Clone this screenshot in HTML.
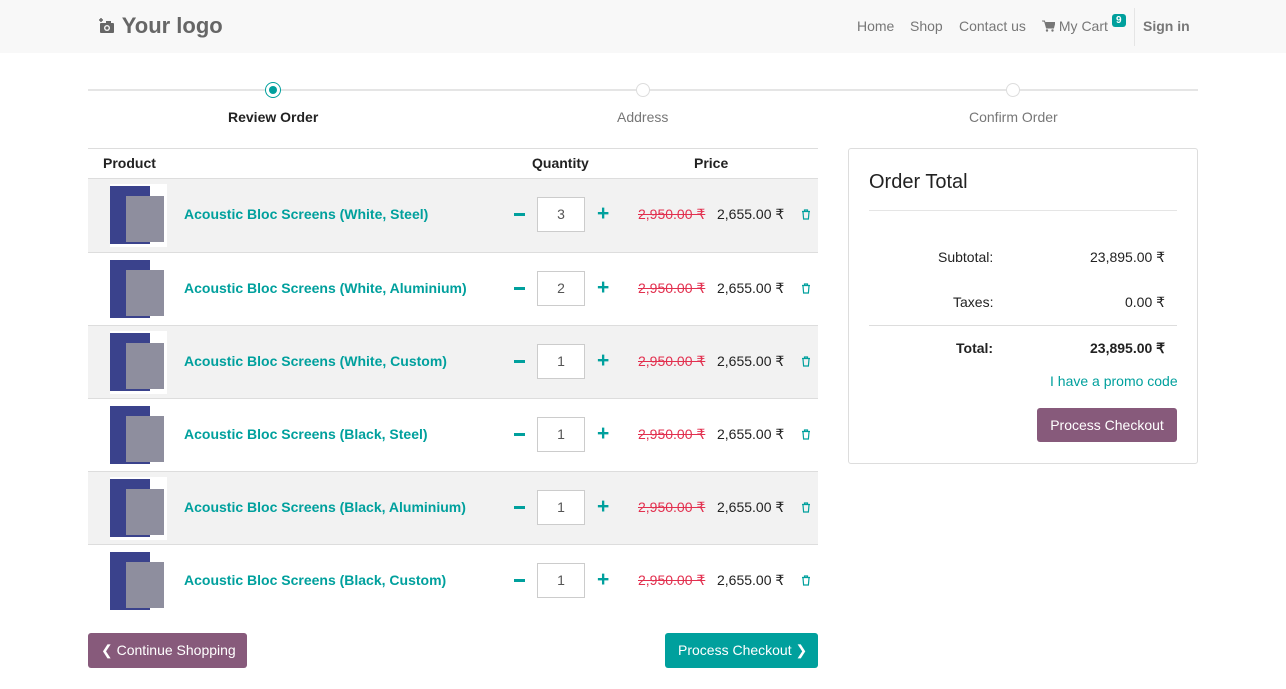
<!DOCTYPE html>
<html><head><meta charset="utf-8"><style>
*{box-sizing:border-box;margin:0;padding:0}
body{width:1286px;height:689px;background:#fff;font-family:"Liberation Sans",sans-serif;font-size:14px;color:#333;position:relative;overflow:hidden}
.a{position:absolute}
.hdr{left:0;top:0;width:1286px;height:53px;background:#f8f8f8}
.nav{top:18px;font-size:14px;color:#777}
.row{left:88px;width:730px;height:73px;border-top:1px solid #ddd}
.row.g{background:#f2f2f2}
.img{left:22px;top:5px;width:57px;height:63px;background:#fff}
.name{left:96px;top:27px;color:#00a09d;font-weight:bold;font-size:14px}
.minus{left:426px;top:34px;width:11px;height:3px;background:#00a09d}
.plus{left:509px;top:23px;color:#00a09d;font-weight:bold;font-size:21px}
.qty{left:449px;top:18px;width:48px;height:35px;border:1px solid #ccc;background:#fff;text-align:center;line-height:33px;color:#555}
.old{left:550px;top:27px;color:#e2304f;text-decoration:line-through}
.new{left:629px;top:27px;color:#222}
.tr{left:713px;top:30px}
.bl{left:0;top:2px;width:40px;height:58px;background:#3a428c}
.gr{left:16px;top:12px;width:38px;height:46px;background:#8e8e9e}
</style></head><body>
<div class="a hdr"></div>
<div class="a" style="left:98px;top:13px;font-size:22px;font-weight:bold;color:#666">
<svg width="18" height="18" viewBox="0 0 18 18" style="vertical-align:-2px"><rect x="2" y="6" width="14" height="10" rx="1" fill="#666"/><rect x="8" y="4" width="5" height="3" fill="#666"/><circle cx="9" cy="11" r="3" fill="#f8f8f8"/><circle cx="9" cy="11" r="1.6" fill="#666"/><path d="M3 1v4M1 3h4" stroke="#666" stroke-width="1.5"/></svg> Your logo</div>
<div class="a nav" style="left:857px">Home</div>
<div class="a nav" style="left:910px">Shop</div>
<div class="a nav" style="left:959px">Contact us</div>
<div class="a nav" style="left:1042px"><svg width="13" height="12" viewBox="0 0 13 12" style="vertical-align:-1px"><path d="M0 1h2.5l2 7h7l1.5-5.5H3.5" fill="#777" stroke="#777" stroke-width="1"/><circle cx="5" cy="10.5" r="1.2" fill="#777"/><circle cx="10.5" cy="10.5" r="1.2" fill="#777"/></svg> My Cart</div>
<div class="a" style="left:1112px;top:14px;background:#00a09d;color:#fff;font-size:10px;font-weight:bold;padding:1px 4px;border-radius:3px">9</div>
<div class="a" style="left:1134px;top:8px;width:1px;height:38px;background:#e5e5e5"></div>
<div class="a nav" style="left:1143px;font-weight:bold">Sign in</div>

<div class="a" style="left:88px;top:89px;width:1110px;height:2px;background:#e5e5e5"></div>
<div class="a" style="left:265px;top:82px;width:16px;height:16px;border-radius:50%;border:1px solid #00a09d;background:#fff"></div>
<div class="a" style="left:269px;top:86px;width:8px;height:8px;border-radius:50%;background:#00a09d"></div>
<div class="a" style="left:636px;top:83px;width:14px;height:14px;border-radius:50%;border:1px solid #ddd;background:#fff"></div>
<div class="a" style="left:1006px;top:83px;width:14px;height:14px;border-radius:50%;border:1px solid #ddd;background:#fff"></div>
<div class="a" style="left:228px;top:109px;font-weight:bold;color:#222">Review Order</div>
<div class="a" style="left:617px;top:109px;color:#777">Address</div>
<div class="a" style="left:969px;top:109px;color:#777">Confirm Order</div>

<div class="a" style="left:88px;top:148px;width:730px;height:1px;background:#ddd"></div>
<div class="a" style="left:103px;top:155px;font-weight:bold;color:#222">Product</div>
<div class="a" style="left:532px;top:155px;font-weight:bold;color:#222">Quantity</div>
<div class="a" style="left:694px;top:155px;font-weight:bold;color:#222">Price</div>
<div class="a" style="left:88px;top:178px;width:730px;height:2px;background:#ddd"></div>

<div class="a row g" style="top:179px;border-top:none"><div class="a img"><div class="a bl"></div><div class="a gr"></div></div><div class="a name">Acoustic Bloc Screens (White, Steel)</div><div class="a minus"></div><div class="a qty">3</div><div class="a plus">+</div><div class="a old">2,950.00 ₹</div><div class="a new">2,655.00 ₹</div><svg class="a tr" width="10" height="11" viewBox="0 0 10 11"><path d="M1 2.5h8M3.5 2.5V1h3v1.5M2 3l.6 7h4.8L8 3" fill="none" stroke="#00a09d" stroke-width="1.2"/></svg></div>
<div class="a row" style="top:252px"><div class="a img"><div class="a bl"></div><div class="a gr"></div></div><div class="a name">Acoustic Bloc Screens (White, Aluminium)</div><div class="a minus"></div><div class="a qty">2</div><div class="a plus">+</div><div class="a old">2,950.00 ₹</div><div class="a new">2,655.00 ₹</div><svg class="a tr" width="10" height="11" viewBox="0 0 10 11"><path d="M1 2.5h8M3.5 2.5V1h3v1.5M2 3l.6 7h4.8L8 3" fill="none" stroke="#00a09d" stroke-width="1.2"/></svg></div>
<div class="a row g" style="top:325px"><div class="a img"><div class="a bl"></div><div class="a gr"></div></div><div class="a name">Acoustic Bloc Screens (White, Custom)</div><div class="a minus"></div><div class="a qty">1</div><div class="a plus">+</div><div class="a old">2,950.00 ₹</div><div class="a new">2,655.00 ₹</div><svg class="a tr" width="10" height="11" viewBox="0 0 10 11"><path d="M1 2.5h8M3.5 2.5V1h3v1.5M2 3l.6 7h4.8L8 3" fill="none" stroke="#00a09d" stroke-width="1.2"/></svg></div>
<div class="a row" style="top:398px"><div class="a img"><div class="a bl"></div><div class="a gr"></div></div><div class="a name">Acoustic Bloc Screens (Black, Steel)</div><div class="a minus"></div><div class="a qty">1</div><div class="a plus">+</div><div class="a old">2,950.00 ₹</div><div class="a new">2,655.00 ₹</div><svg class="a tr" width="10" height="11" viewBox="0 0 10 11"><path d="M1 2.5h8M3.5 2.5V1h3v1.5M2 3l.6 7h4.8L8 3" fill="none" stroke="#00a09d" stroke-width="1.2"/></svg></div>
<div class="a row g" style="top:471px"><div class="a img"><div class="a bl"></div><div class="a gr"></div></div><div class="a name">Acoustic Bloc Screens (Black, Aluminium)</div><div class="a minus"></div><div class="a qty">1</div><div class="a plus">+</div><div class="a old">2,950.00 ₹</div><div class="a new">2,655.00 ₹</div><svg class="a tr" width="10" height="11" viewBox="0 0 10 11"><path d="M1 2.5h8M3.5 2.5V1h3v1.5M2 3l.6 7h4.8L8 3" fill="none" stroke="#00a09d" stroke-width="1.2"/></svg></div>
<div class="a row" style="top:544px"><div class="a img"><div class="a bl"></div><div class="a gr"></div></div><div class="a name">Acoustic Bloc Screens (Black, Custom)</div><div class="a minus"></div><div class="a qty">1</div><div class="a plus">+</div><div class="a old">2,950.00 ₹</div><div class="a new">2,655.00 ₹</div><svg class="a tr" width="10" height="11" viewBox="0 0 10 11"><path d="M1 2.5h8M3.5 2.5V1h3v1.5M2 3l.6 7h4.8L8 3" fill="none" stroke="#00a09d" stroke-width="1.2"/></svg></div>

<div class="a" style="left:88px;top:633px;width:159px;height:35px;background:#875a7b;border-radius:3px;color:#fff;line-height:35px;padding-left:13px">❮ Continue Shopping</div>
<div class="a" style="left:665px;top:633px;width:153px;height:35px;background:#00a09d;border-radius:3px;color:#fff;line-height:35px;padding-left:13px">Process Checkout ❯</div>

<div class="a" style="left:848px;top:148px;width:350px;height:316px;border:1px solid #ddd;border-radius:3px"></div>
<div class="a" style="left:869px;top:171px;font-size:20px;color:#222">Order Total</div>
<div class="a" style="left:869px;top:210px;width:308px;height:1px;background:#e5e5e5"></div>
<div class="a" style="left:938px;top:249px;color:#222">Subtotal:</div>
<div class="a" style="left:1090px;top:249px;color:#222">23,895.00 ₹</div>
<div class="a" style="left:953px;top:294px;color:#222">Taxes:</div>
<div class="a" style="left:1125px;top:294px;color:#222">0.00 ₹</div>
<div class="a" style="left:869px;top:325px;width:308px;height:1px;background:#ddd"></div>
<div class="a" style="left:956px;top:340px;color:#222;font-weight:bold">Total:</div>
<div class="a" style="left:1090px;top:340px;color:#222;font-weight:bold">23,895.00 ₹</div>
<div class="a" style="left:1050px;top:373px;color:#00a09d">I have a promo code</div>
<div class="a" style="left:1037px;top:408px;width:140px;height:34px;background:#875a7b;border-radius:3px;color:#fff;line-height:34px;text-align:center">Process Checkout</div>
</body></html>
